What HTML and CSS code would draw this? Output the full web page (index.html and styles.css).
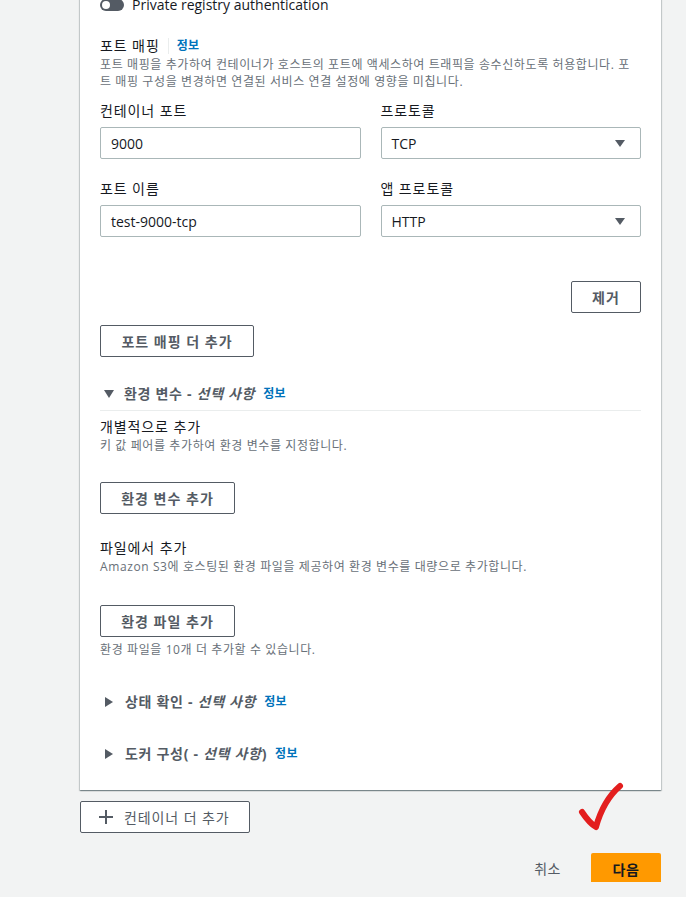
FILE: index.html
```html
<!DOCTYPE html>
<html lang="ko">
<head>
<meta charset="utf-8">
<title>컨테이너</title>
<link rel="stylesheet" href="styles.css">
</head>
<body>
<div class="page">
  <section class="card">
    <div class="toggle-row">
      <span class="toggle"><span class="knob"></span></span>
      <span class="toggle-label">Private registry authentication</span>
    </div>

    <div class="field-head">
      <span class="head-label">포트 매핑</span>
      <span class="sep"></span>
      <a class="info">정보</a>
    </div>
    <p class="desc">포트 매핑을 추가하여 컨테이너가 호스트의 포트에 액세스하여 트래픽을 송수신하도록 허용합니다. 포트 매핑 구성을 변경하면 연결된 서비스 연결 설정에 영향을 미칩니다.</p>

    <div class="grid2">
      <div class="field">
        <label class="label">컨테이너 포트</label>
        <div class="input">9000</div>
      </div>
      <div class="field">
        <label class="label">프로토콜</label>
        <div class="input select">TCP<span class="caret"></span></div>
      </div>
      <div class="field">
        <label class="label">포트 이름</label>
        <div class="input">test-9000-tcp</div>
      </div>
      <div class="field">
        <label class="label">앱 프로토콜</label>
        <div class="input select">HTTP<span class="caret"></span></div>
      </div>
    </div>

    <div class="remove-row"><button class="btn">제거</button></div>
    <button class="btn add-mapping">포트 매핑 더 추가</button>

    <div class="expander env">
      <span class="tri down"></span>
      <span class="exp-title">환경 변수 - <em>선택 사항</em></span>
      <a class="info">정보</a>
    </div>
    <div class="divider"></div>

    <div class="sub-title first">개별적으로 추가</div>
    <p class="desc">키 값 페어를 추가하여 환경 변수를 지정합니다.</p>
    <button class="btn add-env">환경 변수 추가</button>

    <div class="sub-title file">파일에서 추가</div>
    <p class="desc">Amazon S3에 호스팅된 환경 파일을 제공하여 환경 변수를 대량으로 추가합니다.</p>
    <button class="btn add-env add-file">환경 파일 추가</button>
    <p class="desc hint">환경 파일을 10개 더 추가할 수 있습니다.</p>

    <div class="expander health">
      <span class="tri right"></span>
      <span class="exp-title">상태 확인 - <em>선택 사항</em></span>
      <a class="info">정보</a>
    </div>
    <div class="expander docker">
      <span class="tri right"></span>
      <span class="exp-title">도커 구성( - <em>선택 사항</em>)</span>
      <a class="info">정보</a>
    </div>
  </section>

  <button class="btn add-container">
    <svg class="plus" width="14" height="14" viewBox="0 0 14 14"><path d="M7 0v14M0 7h14" stroke="#545b64" stroke-width="2"/></svg>
    <span>컨테이너 더 추가</span>
  </button>

  <div class="footer">
    <span class="cancel">취소</span>
    <button class="btn-primary">다음</button>
  </div>

  <svg class="check" width="60" height="60" viewBox="0 0 60 60">
    <path d="M12 37 C16 43 21 49 26 52 C29 41 35 24 50 11" fill="none" stroke="#e31e1e" stroke-width="6" stroke-linecap="round" stroke-linejoin="round"/>
  </svg>
</div>
</body>
</html>
```

FILE: styles.css
```css
* { box-sizing: border-box; }
html, body {
  margin: 0;
  padding: 0;
  background: #f2f3f3;
  overflow: hidden;
}
body {
  font-family: "Open Sans", "Noto Sans CJK KR", sans-serif;
  color: #16191f;
  font-size: 14px;
}
.page {
  position: relative;
  width: 661px;
  padding-left: 80px;
  height: 897px;
}
.card {
  background: #fff;
  margin-top: -15px;
  padding: 10px 20px 26px;
  box-shadow: 0 1px 1px 0 rgba(0,28,36,.3), 1px 1px 1px 0 rgba(0,28,36,.15), -1px 1px 1px 0 rgba(0,28,36,.15);
  display: flex;
  flex-direction: column;
  align-items: flex-start;
}
.toggle-row {
  display: flex;
  align-items: center;
  height: 20px;
  gap: 8px;
}
.toggle {
  width: 24px;
  height: 12px;
  border-radius: 6px;
  background: #545b64;
  display: flex;
  align-items: center;
  padding-left: 2px;
}
.knob {
  width: 8px;
  height: 8px;
  border-radius: 50%;
  background: #fff;
}
.toggle-label {
  font-size: 14px;
  color: #16191f;
  line-height: 20px;
}
.field-head {
  margin-top: 21px;
  display: flex;
  align-items: center;
  height: 20px;
}
.head-label {
  font-size: 14px;
  line-height: 20px;
  letter-spacing: 0.9px;
}
.sep {
  width: 1px;
  height: 16px;
  background: #eaeded;
  margin: 0 8px;
}
.info {
  color: #0073bb;
  font-weight: 700;
  font-size: 12px;
  line-height: 20px;
  letter-spacing: 0.3px;
}
.desc {
  margin: 0;
  font-size: 12px;
  line-height: 17px;
  color: #687078;
  letter-spacing: 0.6px;
}
.grid2 {
  margin-top: 11px;
  width: 100%;
  display: grid;
  grid-template-columns: 1fr 1fr;
  column-gap: 20px;
  row-gap: 20px;
}
.field {
  display: flex;
  flex-direction: column;
}
.label {
  font-size: 14px;
  line-height: 20px;
  margin-bottom: 6px;
  letter-spacing: 0.9px;
}
.input {
  height: 32px;
  border: 1px solid #aab7b8;
  border-radius: 2px;
  padding: 0 10px;
  display: flex;
  align-items: center;
  font-size: 14px;
  color: #16191f;
}
.select {
  justify-content: space-between;
  padding-right: 15px;
}
.caret {
  width: 0;
  height: 0;
  border-left: 5px solid transparent;
  border-right: 5px solid transparent;
  border-top: 7px solid #545b64;
}
.btn {
  height: 32px;
  border: 1px solid #545b64;
  border-radius: 2px;
  background: #fff;
  color: #545b64;
  font-family: inherit;
  font-weight: 700;
  font-size: 14px;
  padding: 0 20px;
  letter-spacing: 1px;
  cursor: pointer;
}
.remove-row {
  margin-top: 44px;
  width: 100%;
  display: flex;
  justify-content: flex-end;
}
.remove-row .btn { width: 70px; padding: 0; }
.add-mapping { margin-top: 12px; width: 154px; padding: 0; }
.expander {
  display: flex;
  align-items: center;
  height: 20px;
  gap: 8px;
}
.exp-title {
  color: #545b64;
  font-weight: 700;
  font-size: 14px;
  line-height: 20px;
  margin-left: 2px;
  letter-spacing: 0.7px;
}
.exp-title em { font-style: italic; }
.tri { width: 0; height: 0; margin-left: 4px; }
.tri.down {
  border-left: 5px solid transparent;
  border-right: 5px solid transparent;
  border-top: 8px solid #545b64;
}
.tri.right {
  border-top: 5px solid transparent;
  border-bottom: 5px solid transparent;
  border-left: 8px solid #545b64;
  margin-left: 5px;
  margin-right: 2px;
}
.env { margin-top: 27px; }
.divider {
  width: 100%;
  height: 1px;
  background: #eaeded;
  margin-top: 6px;
}
.sub-title {
  font-size: 14px;
  line-height: 20px;
  letter-spacing: 0.9px;
}
.sub-title.first { margin-top: 6px; }
.sub-title.file { margin-top: 24px; }
.add-env { margin-top: 28px; width: 135px; padding: 0; }
.add-env.add-file { margin-top: 30px; }
.hint { margin-top: 4px; }
.health { margin-top: 34px; }
.docker { margin-top: 32px; }
.add-container {
  margin-top: 11px;
  width: 170px;
  display: flex;
  align-items: center;
  gap: 11px;
  padding: 0 0 0 18px;
  font-weight: 400;
}
.add-container span { color: #545b64; letter-spacing: 0.9px; }
.footer {
  margin-top: 20px;
  display: flex;
  justify-content: flex-end;
  align-items: center;
  gap: 30px;
}
.cancel {
  color: #545b64;
  font-size: 14px;
  line-height: 20px;
  letter-spacing: 0.5px;
}
.btn-primary {
  width: 70px;
  height: 32px;
  border: none;
  border-radius: 2px;
  background: #ff9900;
  color: #16191f;
  font-family: inherit;
  font-weight: 700;
  font-size: 14px;
  letter-spacing: 0.5px;
}
.check {
  position: absolute;
  left: 570px;
  top: 790px;
}
```
